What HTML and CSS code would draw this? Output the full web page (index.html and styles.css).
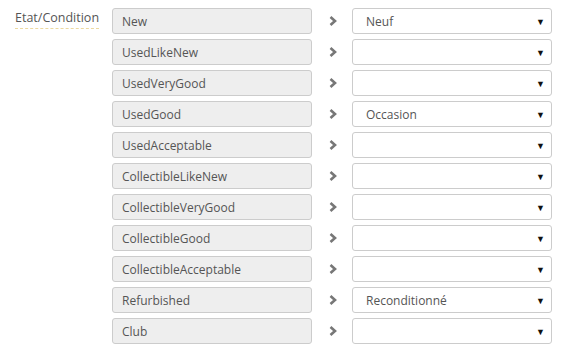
FILE: index.html
```html
<!DOCTYPE html>
<html lang="en">

<head>
  <meta charset="UTF-8">
  <title>Etat/Condition</title>
  <link rel="stylesheet" href="styles.css">
</head>

<body>
  <div class="mapping">
    <div class="mapping-label"><span>Etat/Condition</span></div>
    <div class="mapping-rows">
      <div class="row">
        <div class="source">New</div>
        <div class="arrow"><svg width="8" height="10" viewBox="0 0 8 10"><path d="M1.5 1 L6 5 L1.5 9" fill="none" stroke="#777" stroke-width="2.6"/></svg></div>
        <div class="target">Neuf<span class="caret">&#9660;</span></div>
      </div>
      <div class="row">
        <div class="source">UsedLikeNew</div>
        <div class="arrow"><svg width="8" height="10" viewBox="0 0 8 10"><path d="M1.5 1 L6 5 L1.5 9" fill="none" stroke="#777" stroke-width="2.6"/></svg></div>
        <div class="target"><span class="caret">&#9660;</span></div>
      </div>
      <div class="row">
        <div class="source">UsedVeryGood</div>
        <div class="arrow"><svg width="8" height="10" viewBox="0 0 8 10"><path d="M1.5 1 L6 5 L1.5 9" fill="none" stroke="#777" stroke-width="2.6"/></svg></div>
        <div class="target"><span class="caret">&#9660;</span></div>
      </div>
      <div class="row">
        <div class="source">UsedGood</div>
        <div class="arrow"><svg width="8" height="10" viewBox="0 0 8 10"><path d="M1.5 1 L6 5 L1.5 9" fill="none" stroke="#777" stroke-width="2.6"/></svg></div>
        <div class="target">Occasion<span class="caret">&#9660;</span></div>
      </div>
      <div class="row">
        <div class="source">UsedAcceptable</div>
        <div class="arrow"><svg width="8" height="10" viewBox="0 0 8 10"><path d="M1.5 1 L6 5 L1.5 9" fill="none" stroke="#777" stroke-width="2.6"/></svg></div>
        <div class="target"><span class="caret">&#9660;</span></div>
      </div>
      <div class="row">
        <div class="source">CollectibleLikeNew</div>
        <div class="arrow"><svg width="8" height="10" viewBox="0 0 8 10"><path d="M1.5 1 L6 5 L1.5 9" fill="none" stroke="#777" stroke-width="2.6"/></svg></div>
        <div class="target"><span class="caret">&#9660;</span></div>
      </div>
      <div class="row">
        <div class="source">CollectibleVeryGood</div>
        <div class="arrow"><svg width="8" height="10" viewBox="0 0 8 10"><path d="M1.5 1 L6 5 L1.5 9" fill="none" stroke="#777" stroke-width="2.6"/></svg></div>
        <div class="target"><span class="caret">&#9660;</span></div>
      </div>
      <div class="row">
        <div class="source">CollectibleGood</div>
        <div class="arrow"><svg width="8" height="10" viewBox="0 0 8 10"><path d="M1.5 1 L6 5 L1.5 9" fill="none" stroke="#777" stroke-width="2.6"/></svg></div>
        <div class="target"><span class="caret">&#9660;</span></div>
      </div>
      <div class="row">
        <div class="source">CollectibleAcceptable</div>
        <div class="arrow"><svg width="8" height="10" viewBox="0 0 8 10"><path d="M1.5 1 L6 5 L1.5 9" fill="none" stroke="#777" stroke-width="2.6"/></svg></div>
        <div class="target"><span class="caret">&#9660;</span></div>
      </div>
      <div class="row">
        <div class="source">Refurbished</div>
        <div class="arrow"><svg width="8" height="10" viewBox="0 0 8 10"><path d="M1.5 1 L6 5 L1.5 9" fill="none" stroke="#777" stroke-width="2.6"/></svg></div>
        <div class="target">Reconditionné<span class="caret">&#9660;</span></div>
      </div>
      <div class="row">
        <div class="source">Club</div>
        <div class="arrow"><svg width="8" height="10" viewBox="0 0 8 10"><path d="M1.5 1 L6 5 L1.5 9" fill="none" stroke="#777" stroke-width="2.6"/></svg></div>
        <div class="target"><span class="caret">&#9660;</span></div>
      </div>
    </div>
  </div>
</body>

</html>
```

FILE: styles.css
```css
body {
  font-family: "Open Sans", Arial, sans-serif;
  font-size: 12px;
  color: #555;
  margin: 0;
  padding: 0;
  background-color: #fff;
}

.mapping {
  display: flex;
  padding-top: 8px;
}

.mapping-label {
  width: 112px;
  padding-left: 15px;
  box-sizing: border-box;
}

.mapping-label span {
  display: inline-block;
  font-size: 12.5px;
  line-height: 18px;
  padding-top: 1px;
  padding-bottom: 1px;
  border-bottom: 1px dashed #ecd9a0;
}

.mapping-rows {
  display: flex;
  flex-direction: column;
  gap: 5px;
}

.row {
  display: flex;
  align-items: center;
  height: 26px;
}

.source {
  width: 200px;
  height: 26px;
  line-height: 25px;
  padding: 0 9px;
  box-sizing: border-box;
  background-color: #eee;
  border: 1px solid #ccc;
  border-radius: 3px;
}

.arrow {
  width: 40px;
  display: flex;
  justify-content: flex-start;
  padding-left: 17px;
  box-sizing: border-box;
}

.arrow svg {
  display: block;
}

.target {
  position: relative;
  width: 200px;
  height: 26px;
  line-height: 25px;
  padding: 0 13px;
  box-sizing: border-box;
  background-color: #fff;
  border: 1px solid #ccc;
  border-radius: 3px;
}

.caret {
  position: absolute;
  right: 6px;
  top: 0;
  font-size: 9px;
  color: #111;
}
```
